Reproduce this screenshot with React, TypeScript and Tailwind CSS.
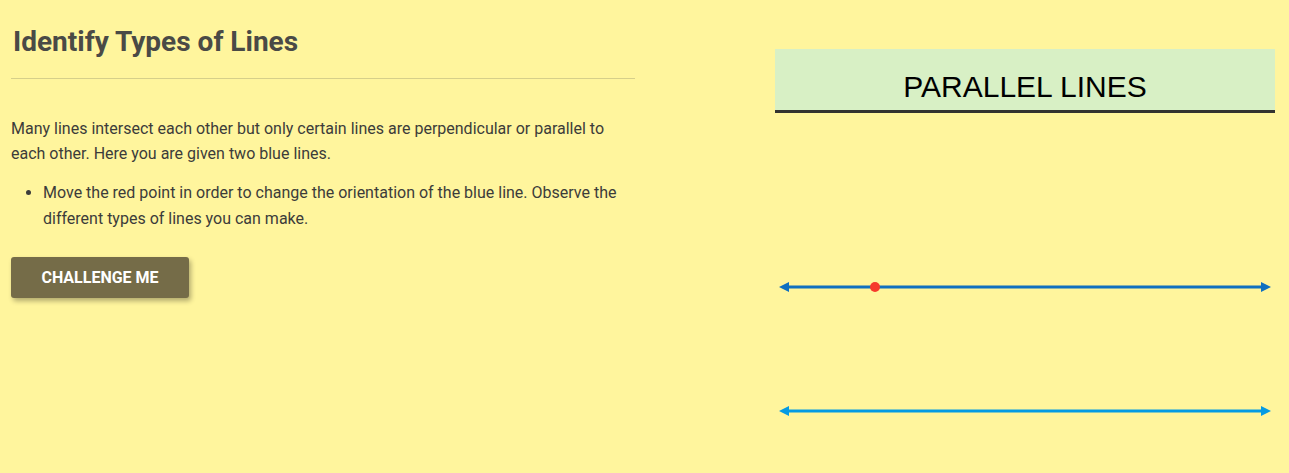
import React from "react";

function Line({ y, color, dot }: { y: number; color: string; dot?: number }) {
  return (
    <g>
      <line x1={10} y1={y} x2={490} y2={y} stroke={color} strokeWidth={3} />
      <polygon points={`4,${y} 14,${y - 5} 14,${y + 5}`} fill={color} />
      <polygon points={`496,${y} 486,${y - 5} 486,${y + 5}`} fill={color} />
      {dot !== undefined && <circle cx={dot} cy={y} r={5} fill="#f63a2c" />}
    </g>
  );
}

export default function App() {
  return (
    <div
      className="w-[1289px] h-[473px] bg-[#fff59d] flex overflow-hidden"
      style={{ fontFamily: "Roboto, 'Noto Sans', sans-serif" }}
    >
      <div className="w-[624px] ml-[11px] flex flex-col">
        <h1 className="text-[28px] font-bold text-[#4a4a46] leading-[32px] mt-[26px] pl-[2px]">
          Identify Types of Lines
        </h1>
        <div className="h-px bg-[#d6cf8a] mt-[20px]" />
        <p className="text-[16px] leading-[25px] text-[#3c3c3a] mt-[37px]">
          Many lines intersect each other but only certain lines are perpendicular or parallel to
          each other. Here you are given two blue lines.
        </p>
        <ul className="list-disc pl-[32px] mt-[14px] text-[16px] leading-[26px] text-[#3c3c3a]">
          <li>
            Move the red point in order to change the orientation of the blue line. Observe the
            different types of lines you can make.
          </li>
        </ul>
        <div className="mt-[25px]">
          <button className="w-[178px] h-[41px] bg-[#756c48] text-white text-[16px] font-bold uppercase rounded-[3px] shadow-[2px_3px_5px_rgba(0,0,0,0.3)]">
            Challenge Me
          </button>
        </div>
      </div>
      <div className="w-[500px] ml-[140px] flex flex-col">
        <div
          className="mt-[49px] h-[64px] bg-[#d8f0c5] border-b-[3px] border-[#333330] flex items-center justify-center text-[30px] text-black"
          style={{ fontFamily: "'Liberation Sans', Arial, sans-serif" }}
        >
          <span className="mt-[13px]">PARALLEL LINES</span>
        </div>
        <svg width={500} height={360} className="block">
          <Line y={174} color="#0f70c0" dot={100} />
          <Line y={298} color="#049be3" />
        </svg>
      </div>
    </div>
  );
}
